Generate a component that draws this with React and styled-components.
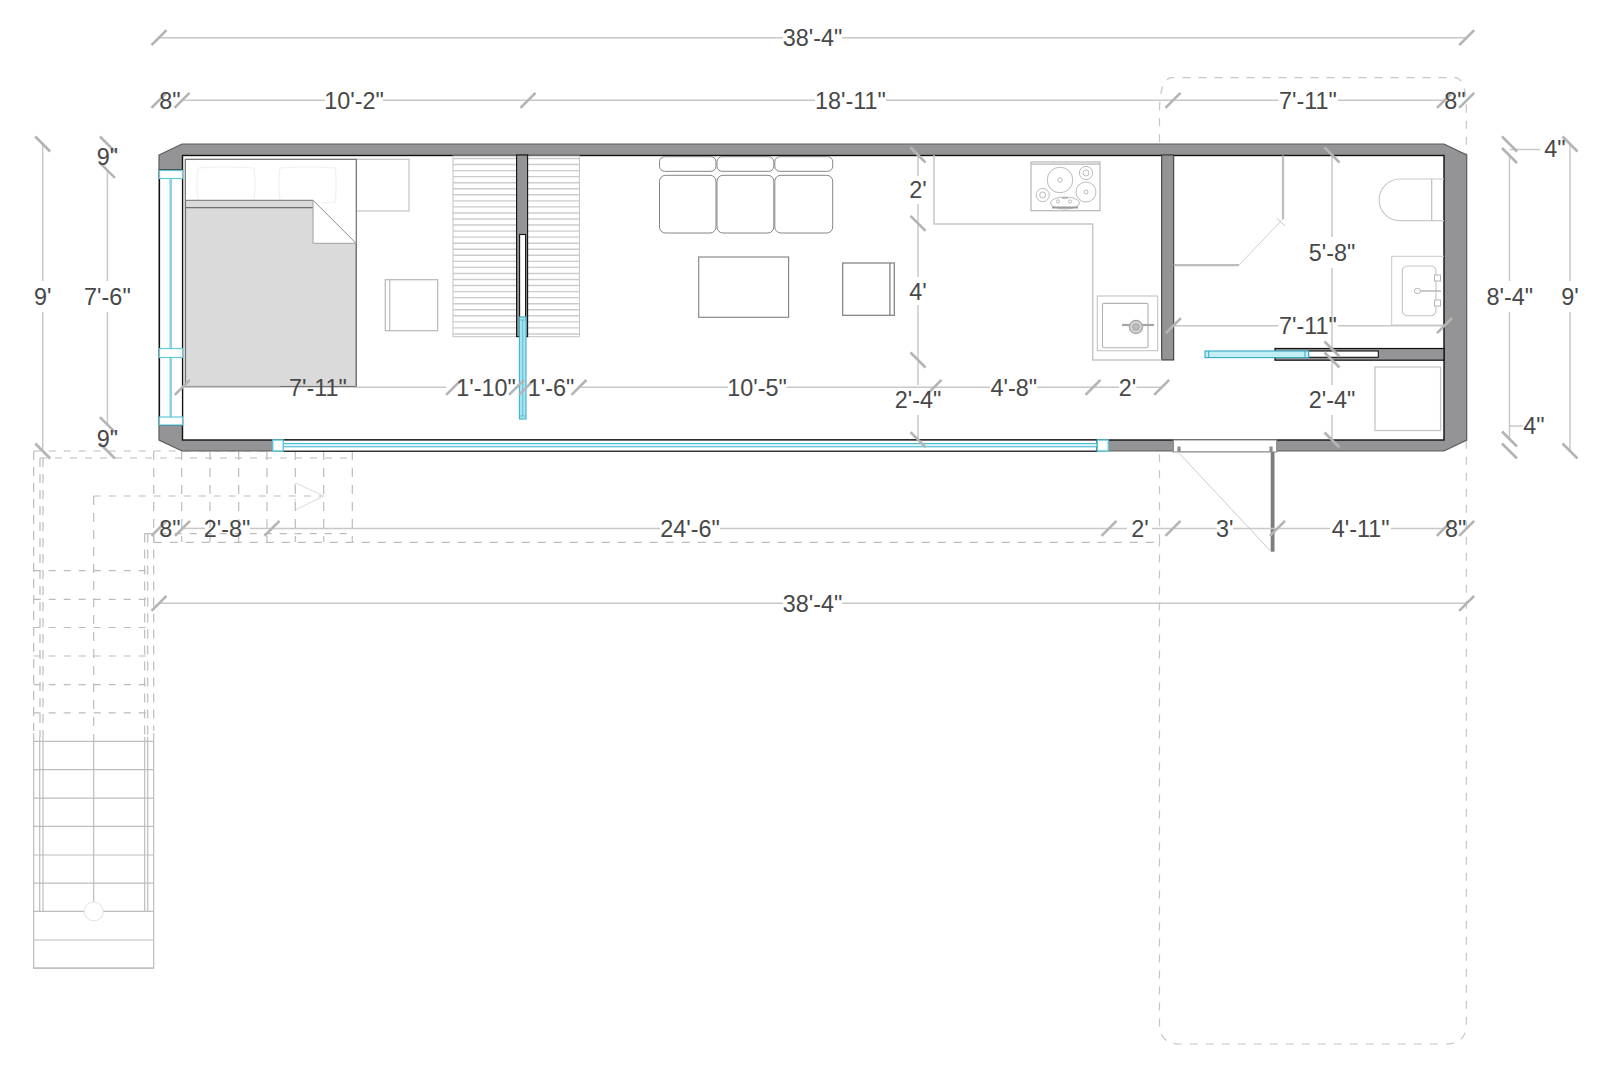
import React from "react";
import styled, { createGlobalStyle } from "styled-components";

const Global = createGlobalStyle`
  html, body { margin: 0; padding: 0; background: #fff; }
  #root { width: 1600px; height: 1076px; overflow: hidden; }
`;

const Sheet = styled.main`
  width: 1600px;
  height: 1076px;
  background: #fff;
`;

const Plan = styled.svg`
  display: block;
  width: 1600px;
  height: 1076px;
`;

const DimLine = styled.line`
  stroke: #c8c8c8;
  stroke-width: 1.5;
`;

const TickMark = styled.line`
  stroke: #b4b4b4;
  stroke-width: 2.6;
`;

const DimLabel = styled.text`
  font-family: "Liberation Sans", Arial, sans-serif;
  font-size: 23.4px;
  fill: #484848;
  text-anchor: middle;
`;

const Dash = styled.path`
  fill: none;
  stroke: ${(p) => p.$color || "#bcbcbc"};
  stroke-width: ${(p) => p.$w || 1.2};
  stroke-dasharray: ${(p) => p.$dash || "7 8"};
`;

const Solid = styled.path`
  fill: ${(p) => p.$fill || "none"};
  stroke: ${(p) => p.$color || "#bdbdbd"};
  stroke-width: ${(p) => p.$w || 1.2};
`;

const Block = styled.rect`
  fill: ${(p) => p.$fill || "#fff"};
  stroke: ${(p) => p.$color || "none"};
  stroke-width: ${(p) => p.$w || 1};
`;

const Cushion = styled.rect`
  fill: #fff;
  stroke: #858585;
  stroke-width: 1;
`;

const Burner = styled.circle`
  fill: ${(p) => p.$fill || "#fff"};
  stroke: ${(p) => p.$color || "#bcbcbd"};
  stroke-width: ${(p) => p.$w || 1};
`;

const Oval = styled.ellipse`
  fill: #fff;
  stroke: #bcbcbc;
  stroke-width: 1;
`;

/* ---------- dimensions ---------- */
const hSegments = [
  [37.7, [159, 783], [842, 1466.7]],
  [100.3, [182, 325], [383, 815], [886, 1278.5], [1338, 1444]],
  [387.3, [182, 280], [356, 446], [579, 728], [786.5, 990], [1037, 1119], [1136.5, 1161.7]],
  [325.7, [1173.7, 1278.5], [1338, 1444]],
  [528.4, [182, 205], [250, 660], [720, 1127], [1152, 1216.7], [1233, 1330], [1391, 1444]],
  [603.3, [159, 783], [842, 1466.7]],
  [149.5, [1509.5, 1540]],
  [426, [1509.5, 1523]],
];

const vSegments = [
  [42.7, [144, 281], [312, 451]],
  [107.4, [170, 281], [312, 425]],
  [918, [155, 176], [204, 277], [305, 385], [415, 440]],
  [1332, [155, 237], [268, 349], [360, 385], [415, 440]],
  [1509.5, [155, 281], [312, 439]],
  [1570, [144, 281], [312, 451]],
];

const slashes = [
  [159, 37.7], [1466.7, 37.7],
  [159, 100.3], [182, 100.3], [528, 100.3], [1173, 100.3], [1444.5, 100.3], [1466.7, 100.3],
  [182.3, 387.3], [453.7, 387.3], [516.5, 387.3], [526.5, 387.3], [579, 387.3], [934, 387.3], [1093, 387.3], [1161.7, 387.3],
  [1173.4, 325.7], [1444.5, 325.7],
  [159, 528.4], [182.5, 528.4], [272, 528.4], [1109, 528.4], [1173, 528.4], [1277.5, 528.4], [1444.3, 528.4], [1466.7, 528.4],
  [159, 603.3], [1466.7, 603.3],
];

const backslashes = [
  [42.7, 144], [42.7, 451],
  [107.4, 144], [107.4, 170.3], [107.4, 424.7], [107.4, 451],
  [918, 155], [918, 223.3], [918, 360], [918, 439.7],
  [1332, 155], [1332, 349], [1332, 360], [1332, 440],
  [1509.5, 144], [1509.5, 155.5], [1509.5, 439], [1509.5, 451],
  [1570, 144], [1570, 451],
];

const labels = [
  ["38'-4\"", 812.5, 37.7],
  ["8\"", 170, 100.3], ["10'-2\"", 354, 100.3], ["18'-11\"", 850.5, 100.3], ["7'-11\"", 1308, 100.3], ["8\"", 1455, 100.3],
  ["9\"", 107.4, 157], ["7'-6\"", 107.4, 297], ["9\"", 107.4, 439], ["9'", 42.7, 297],
  ["7'-11\"", 318, 387.3], ["1'-10\"", 486, 387.3], ["1'-6\"", 551, 387.3], ["10'-5\"", 757, 387.3],
  ["4'-8\"", 1013.8, 387.3], ["2'", 1127.5, 387.3],
  ["2'", 918, 190], ["4'", 918, 291.7], ["2'-4\"", 918, 400],
  ["5'-8\"", 1332, 252.3], ["7'-11\"", 1308, 325.7], ["2'-4\"", 1332, 400],
  ["8'-4\"", 1509.7, 297], ["9'", 1570, 297], ["4\"", 1555, 149], ["4\"", 1534, 426],
  ["8\"", 170, 528.4], ["2'-8\"", 227, 528.4], ["24'-6\"", 690, 528.4], ["2'", 1140, 528.4], ["3'", 1224.7, 528.4],
  ["4'-11\"", 1360.7, 528.4], ["8\"", 1455.7, 528.4],
  ["38'-4\"", 812.5, 603.3],
];

const Dimensions = () => (
  <g>
    {hSegments.flatMap(([y, ...segs], i) =>
      segs.map(([a, b], j) => <DimLine key={`h${i}-${j}`} x1={a} x2={b} y1={y} y2={y} />)
    )}
    {vSegments.flatMap(([x, ...segs], i) =>
      segs.map(([a, b], j) => <DimLine key={`v${i}-${j}`} x1={x} x2={x} y1={a} y2={b} />)
    )}
    {slashes.map(([x, y], i) => (
      <TickMark key={`s${i}`} x1={x - 7.5} y1={y + 7.5} x2={x + 7.5} y2={y - 7.5} />
    ))}
    {backslashes.map(([x, y], i) => (
      <TickMark key={`b${i}`} x1={x - 7.5} y1={y - 7.5} x2={x + 7.5} y2={y + 7.5} />
    ))}
  </g>
);

const Labels = () => (
  <g>
    {labels.map(([t, x, y], i) => (
      <DimLabel key={i} x={x} y={y + 8.4}>{t}</DimLabel>
    ))}
  </g>
);

/* ---------- deck and stairs ---------- */
const stairColumns = [153.7, 181.7, 210, 238.7, 267, 295.3, 323.7, 352.3];
const dashedTreads = [570.7, 599.3, 627.5, 656, 684.6, 712.9];
const solidTreads = [741.4, 769.6, 798.2, 826.4, 855, 883.2, 911.4, 940, 968.2];

const Deck = () => (
  <g>
    <Dash d="M1159.5 542.3 V 110 Q1160 78 1172 77.7 H1455 Q1466.3 78 1466.3 110 V1024 Q1466.3 1044 1446 1044 H1180 Q1159.5 1044 1159.5 1024 V 542.3" $dash="8 8" $color="#c6c6c6" />
    <Dash d="M153.7 542.3 H1159.5" $dash="8 8" />
    <Dash d="M33.7 451 H352.3" />
    <Dash d="M40 458 H352.3" />
    <Dash d="M144.7 533.6 H352.3" />
    <Dash d="M33.7 451 V731" $dash="9 7" />
    <Dash d="M40 458 V737 M43 458 V737" $dash="9 7" />
    <Dash d="M144.7 533.6 V737 M147.7 533.6 V737" $dash="9 7" />
    <Dash d="M153.7 533.6 V731" $dash="9 7" />
    <Dash d="M93.7 496 V737" $dash="9 8" />
    <Dash d="M93.7 496 H323.7" />
    <Solid d="M295.3 483 L323.7 496 L295.3 510" $color="#e2e2e2" />
    <Dash d="M295.3 483 V510" $color="#e2e2e2" />
    {stairColumns.map((x) => (
      <Dash key={x} d={`M${x} 451 V542`} $dash="9 8" />
    ))}
    {dashedTreads.map((y) => (
      <Dash key={y} d={`M33.7 ${y} H153.7`} />
    ))}
    {solidTreads.map((y) => (
      <Solid key={y} d={`M33.7 ${y} H153.7`} />
    ))}
    <Solid d="M33.7 733 V968.2 H153.7 V733" />
    <Solid d="M39.7 737 V911.4 M43 737 V911.4 M144.7 737 V911.4 M147.7 737 V911.4" />
    <Solid d="M93.7 737 V902" />
    <Burner cx="93.7" cy="911.4" r="9.5" $color="#e2e2e2" />
  </g>
);

/* ---------- house shell ---------- */
const Shell = () => (
  <g>
    <Solid d="M159 155 L182 144 H1444 L1466.7 155 V440 L1444 451 H182 L159 440 Z" $fill="#949496" $color="#5c5c5c" />
    <Block x="182.5" y="155.5" width="1261.5" height="284.5" $fill="#fff" $color="#111" $w="1.4" />
    {/* left window */}
    <Block x="159.5" y="170" width="23" height="255" $fill="#fff" $color="#111" $w="1.2" />
    <Block x="169.4" y="178" width="2.6" height="239" $fill="#86d6e6" />
    <Block x="159.5" y="170.5" width="23" height="8" $fill="#fff" $color="#62c8dc" $w="1.2" />
    <Block x="159.5" y="348.5" width="23" height="9" $fill="#fff" $color="#62c8dc" $w="1.2" />
    <Block x="159.5" y="417" width="23" height="8" $fill="#fff" $color="#62c8dc" $w="1.2" />
    {/* front window */}
    <Block x="283" y="440" width="814" height="11.2" $fill="#fff" $color="#111" $w="1.2" />
    <Block x="283" y="443.6" width="814" height="3.2" $fill="#dff4f8" $color="#3fb4cc" $w="1" />
    <Block x="272.7" y="440" width="10.6" height="11" $fill="#fff" $color="#56c4da" $w="1.4" />
    <Block x="1097.3" y="440" width="11" height="11" $fill="#fff" $color="#56c4da" $w="1.4" />
    {/* door */}
    <Solid d="M1173.4 440 H1276.7 V452 H1272 V447 H1270 V451.8 H1180 V447 H1178 V452 H1173.4 Z" $fill="#fff" $color="#8c8c8c" />
    <Block x="1270.7" y="452" width="3.8" height="99.7" $fill="#7c7c7c" />
    <Solid d="M1178 452 L1270.5 551" $color="#cbcbcb" $w="1" />
  </g>
);

const Partitions = () => (
  <g>
    <Block x="516.6" y="155" width="11" height="181.6" $fill="#949496" $color="#111" $w="1.1" />
    <Block x="519.6" y="234.5" width="6" height="83" $fill="#fff" $color="#111" $w="1.1" />
    <Block x="519.4" y="317" width="6.6" height="102" $fill="#a6e4f0" $color="#3fb1c8" $w="1.1" />
    <Solid d="M519.4 320 H526 M519.4 416 H526 M522.7 320 V416" $color="#3fb1c8" $w="0.7" />
    <Block x="1161.7" y="155" width="12" height="205" $fill="#949496" $color="#333" $w="1" />
    <Block x="1275" y="348.5" width="169" height="11.7" $fill="#949496" $color="#111" $w="1.2" />
    <Block x="1308.3" y="351" width="70" height="6.3" $fill="#fff" $color="#111" $w="1.1" />
    <Block x="1205" y="351" width="103.7" height="6.6" $fill="#c4eef6" $color="#34a9c1" $w="1.1" />
    <Solid d="M1208.7 351 V357.6 M1305 351 V357.6" $color="#34a9c1" $w="1" />
  </g>
);

/* ---------- furniture ---------- */
const rugLines = Array.from({ length: 30 }, (_, i) => 158.5 + i * 6.05);

const Bedroom = () => (
  <g>
    <Block x="356.3" y="159.3" width="52.7" height="51.7" $color="#c9c9c9" $w="1.3" />
    <Block x="185.3" y="159.3" width="171" height="227.4" $fill="#fff" $color="#6e6e6e" $w="1.2" />
    <Solid d="M198 168 Q226 166 254 168 Q256 184 254 200 M198 168 Q196 184 198 200" $color="#f0f0f0" />
    <Solid d="M280 168 Q308 166 335.5 168 Q337 185 335.5 202 Q324 204 313 202 M280 168 Q278 184 280 200" $color="#f0f0f0" />
    <Solid d="M185.6 200.3 H313 L356 243.3 V386.4 H185.6 Z" $fill="#dadada" $color="#6e6e6e" $w="1" />
    <Solid d="M185.6 207.6 H313" $color="#6e6e6e" $w="1.2" />
    <Solid d="M313 200.3 L356 243.3 H313 Z" $fill="#fff" $color="#a0a0a0" $w="1" />
    <Block x="385.3" y="279.7" width="52.4" height="51" $color="#bcbcbc" $w="1.3" />
    <Solid d="M389.7 279.7 V330.7" $color="#bcbcbc" />
  </g>
);

const Rug = () => (
  <g>
    <Block x="453" y="156" width="126.4" height="180.7" $color="#c4c4c4" $w="1" />
    {rugLines.map((y) => (
      <Solid key={y} d={`M453 ${y} H579.4`} $color="#cccccc" $w="1.4" />
    ))}
  </g>
);

const Lounge = () => (
  <g>
    <Cushion x="659.5" y="156.7" width="56.5" height="14.6" rx="5" />
    <Cushion x="717" y="156.7" width="56.8" height="14.6" rx="5" />
    <Cushion x="774.8" y="156.7" width="57.9" height="14.6" rx="5" />
    <Cushion x="659.5" y="175.3" width="56.5" height="57.7" rx="6" />
    <Cushion x="717" y="175.3" width="56.8" height="57.7" rx="6" />
    <Cushion x="774.8" y="175.3" width="57.9" height="57.7" rx="6" />
    <Block x="698.7" y="257" width="89.9" height="60.3" $color="#8a8a8a" $w="1.2" />
    <Block x="842.7" y="263" width="51.6" height="52.3" $color="#7d7d7d" $w="1.2" />
    <Solid d="M889.9 263 V315.3" $color="#7d7d7d" />
  </g>
);

const Kitchen = () => (
  <g>
    <Solid d="M934 155 V224 H1092.7 V360 H1161.7" $color="#c6c6c6" $w="1.5" />
    <Block x="1031" y="162" width="69" height="48.7" $color="#b6b6b6" $w="1.2" />
    <Solid d="M1031 164.2 H1100" $color="#b6b6b6" />
    <Burner cx="1060" cy="180" r="12.8" />
    <Burner cx="1060" cy="180" r="2.2" />
    <Burner cx="1086" cy="173" r="6.6" />
    <Burner cx="1086" cy="173" r="3" />
    <Burner cx="1086" cy="192" r="10" />
    <Burner cx="1086" cy="192" r="2" />
    <Burner cx="1042.7" cy="195" r="6.6" />
    <Burner cx="1042.7" cy="195" r="3" />
    <Oval cx="1065" cy="203" rx="14.5" ry="6" />
    <Solid d="M1052 207.5 H1078" $color="#9c9c9c" $w="2" />
    <Burner cx="1058" cy="201.5" r="1.6" />
    <Burner cx="1070" cy="201.5" r="1.6" />
    <Solid d="M1062 198 H1068" $color="#9c9c9c" />
    <Block x="1097.3" y="296" width="60.4" height="54.7" $color="#c4c4c4" $w="1.1" />
    <Block x="1102.5" y="303.4" width="45.5" height="44.3" rx="1.5" $color="#b2b2b2" $w="1.1" />
    <Solid d="M1122 325 H1154" $color="#a4a4a4" $w="2.2" />
    <Burner cx="1136" cy="327" r="6.6" $fill="#d2d2d2" $color="#a4a4a4" $w="1.2" />
    <Burner cx="1136" cy="327" r="3.2" $fill="#bdbdbd" $color="#a4a4a4" $w="1" />
  </g>
);

const Bath = () => (
  <g>
    <Solid d="M1283 155.5 V219" $color="#bdbdbd" $w="2.2" />
    <Solid d="M1283 219 L1239 265" $color="#d0d0d0" $w="1" />
    <Solid d="M1239 265.2 H1173.7" $color="#bdbdbd" $w="2.2" />
    <Solid d="M1276.5 218 L1285 226" $color="#c6c6c6" $w="1" />
    <Solid d="M1444 179 H1400 A20.8 20.8 0 0 0 1400 220.7 H1444" $color="#c9c9c9" $w="1.2" />
    <Solid d="M1431.7 179 V220.7" $color="#bdbdbd" $w="1.2" />
    <Solid d="M1444 256.3 H1391.7 V325 H1444" $color="#c9c9c9" $w="1" />
    <Block x="1402.3" y="266" width="33.7" height="49.7" rx="5" $color="#c4c4c4" $w="1.1" />
    <Solid d="M1420 291 H1441" $color="#bcbcbc" $w="1.6" />
    <Block x="1414.5" y="288.6" width="6" height="4.8" rx="2.2" $color="#b4b4b4" />
    <Block x="1434.5" y="275" width="6" height="6" $color="#b4b4b4" />
    <Block x="1434.5" y="300" width="6" height="6" $color="#b4b4b4" />
    <Block x="1375" y="367" width="65.6" height="63.5" $color="#c6c6c6" $w="1.3" />
  </g>
);

export default function App() {
  return (
    <Sheet>
      <Global />
      <Plan viewBox="0 0 1600 1076" xmlns="http://www.w3.org/2000/svg">
        <Deck />
        <Shell />
        <Rug />
        <Partitions />
        <Bedroom />
        <Lounge />
        <Kitchen />
        <Bath />
        <Dimensions />
        <Labels />
      </Plan>
    </Sheet>
  );
}
